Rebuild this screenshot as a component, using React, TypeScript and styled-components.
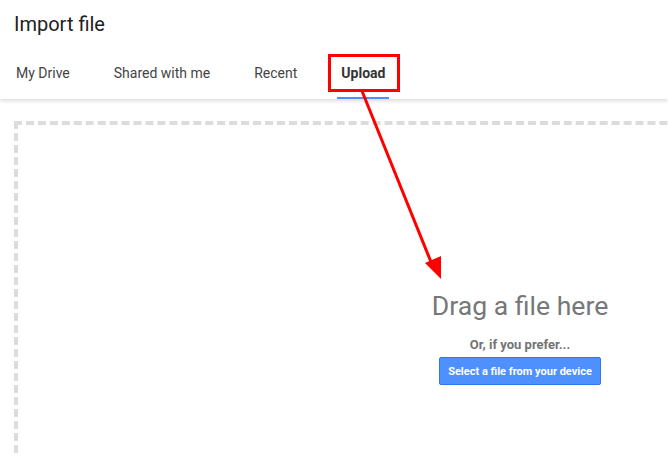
import React from "react";
import styled, { createGlobalStyle } from "styled-components";

const GlobalStyle = createGlobalStyle`
  html, body {
    margin: 0;
    padding: 0;
    background: #ffffff;
    overflow: hidden;
  }
  body {
    font-family: Roboto, "Liberation Sans", Arial, sans-serif;
  }
`;

const Page = styled.div`
  position: relative;
  width: 668px;
  height: 456px;
  overflow: hidden;
`;

const Header = styled.header`
  position: relative;
  z-index: 1;
  height: 99px;
  background: #fff;
  box-shadow: 0 2px 4px rgba(0, 0, 0, 0.14);
  display: flex;
  flex-direction: column;
`;

const Title = styled.h1`
  margin: 0;
  padding: 12px 0 0 14px;
  font-size: 20px;
  line-height: 24px;
  font-weight: 400;
  color: #212121;
`;

const Tabs = styled.nav`
  margin-top: auto;
  display: flex;
  gap: 36px;
  padding-left: 12px;
  height: 51px;
`;

const Tab = styled.div<{ $active?: boolean }>`
  display: flex;
  align-items: center;
  padding: 0 4px;
  font-size: 14px;
  color: ${(p) => (p.$active ? "#333" : "#444")};
  font-weight: ${(p) => (p.$active ? 700 : 400)};
  border-bottom: 2px solid ${(p) => (p.$active ? "#4d90fe" : "transparent")};
  box-sizing: border-box;
`;

const Content = styled.main`
  padding: 22px 0 0 14px;
`;

const DropZone = styled.section`
  width: 1012px;
  height: 440px;
  box-sizing: border-box;
  border: 4px dashed #dcdcdc;
  display: flex;
  flex-direction: column;
  align-items: center;
  padding-top: 166px;
`;

const DragText = styled.div`
  font-size: 26.6px;
  line-height: 30px;
  color: #777;
`;

const Prefer = styled.div`
  margin-top: 15px;
  font-size: 13px;
  line-height: 17px;
  font-weight: 700;
  color: #737373;
`;

const SelectButton = styled.button`
  margin-top: 4px;
  width: 162px;
  height: 28px;
  border: 1px solid #3079ed;
  border-radius: 2px;
  background: #4d90fe;
  color: #fff;
  font-family: inherit;
  font-size: 11px;
  font-weight: 700;
  padding: 0;
  cursor: pointer;
`;

const Annotation = styled.svg`
  position: absolute;
  inset: 0;
  z-index: 2;
  pointer-events: none;
`;

const tabs = ["My Drive", "Shared with me", "Recent", "Upload"];

export default function App() {
  return (
    <Page>
      <GlobalStyle />
      <Header>
        <Title>Import file</Title>
        <Tabs>
          {tabs.map((t) => (
            <Tab key={t} $active={t === "Upload"}>
              {t}
            </Tab>
          ))}
        </Tabs>
      </Header>
      <Content>
        <DropZone>
          <DragText>Drag a file here</DragText>
          <Prefer>Or, if you prefer...</Prefer>
          <SelectButton>Select a file from your device</SelectButton>
        </DropZone>
      </Content>
      <Annotation width="668" height="456" viewBox="0 0 668 456">
        <rect x="329.5" y="55.5" width="69" height="35" fill="none" stroke="#ff0000" strokeWidth="3" />
        <line x1="362" y1="91" x2="431" y2="262" stroke="#ff0000" strokeWidth="3" />
        <polygon points="425,263 441,256 441,279" fill="#ff0000" />
      </Annotation>
    </Page>
  );
}
